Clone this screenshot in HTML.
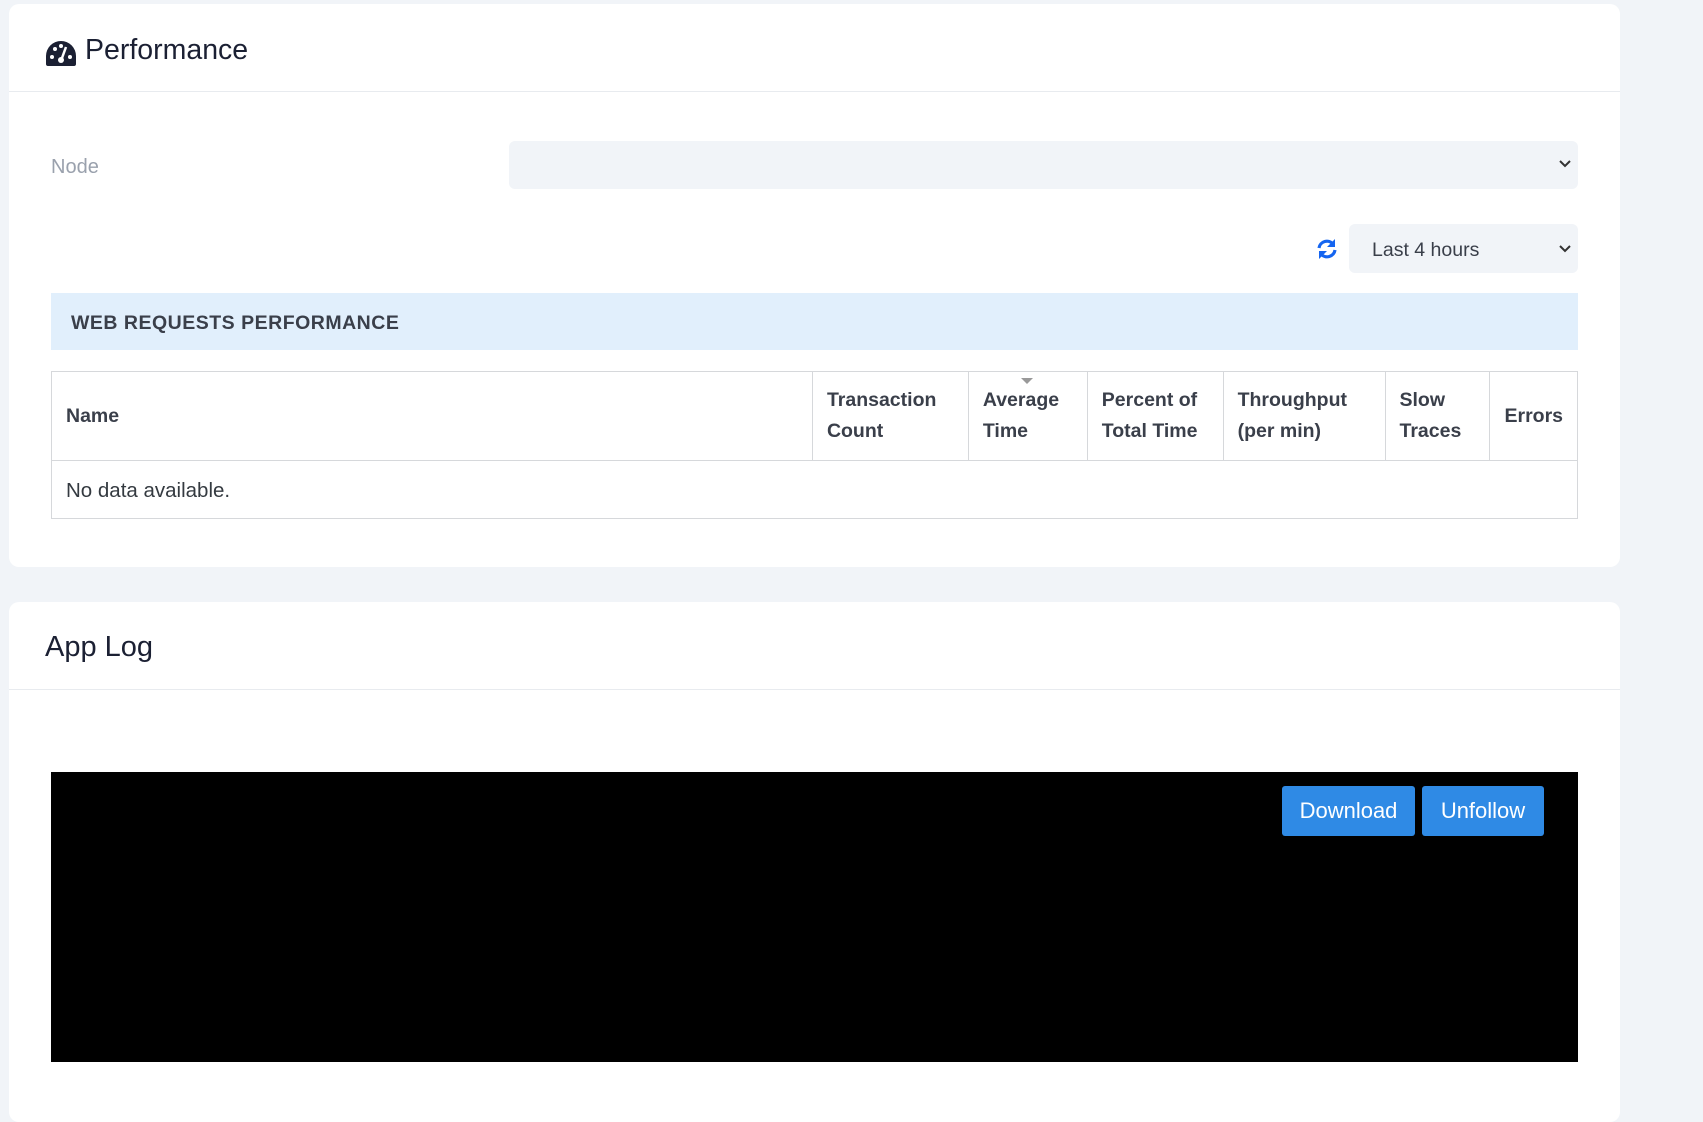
<!DOCTYPE html>
<html><head><style>
*{box-sizing:border-box;margin:0;padding:0}
body{width:1703px;height:1083px;background:#f1f4f8;font-family:"Liberation Sans",sans-serif;color:#212529;position:relative;overflow:hidden}
.card{position:absolute;left:9px;width:1611px;background:#fff;border-radius:10px}
.hdr{position:absolute;left:0;right:0;border-bottom:1px solid #e8ebef}
.abs{position:absolute}
th,td{border:1px solid #d6d8db;text-align:left;font-size:19.5px}
th{font-weight:bold;color:#3a3f4a;line-height:31px;padding:0 14px;vertical-align:middle}
</style></head><body>
<div class="card" style="top:4px;height:563px">
  <div class="hdr" style="top:0;height:88px"></div>
  <svg class="abs" style="left:36px;top:36px" width="32" height="26" viewBox="0 0 32 26">
    <path d="M16 1A15 15 0 0 0 1 16v8c0 1 .6 2 2 2h26c1.4 0 2-1 2-2v-8A15 15 0 0 0 16 1z" fill="#1b2033"/>
    <circle cx="7" cy="17" r="2" fill="#fff"/><circle cx="10" cy="9" r="2" fill="#fff"/><circle cx="16" cy="6" r="2" fill="#fff"/><circle cx="25" cy="17" r="2" fill="#fff"/>
    <path d="M21 7l-4 11" stroke="#fff" stroke-width="2.5"/><circle cx="16" cy="20" r="3" fill="#fff"/>
  </svg>
  <div class="abs" style="left:76px;top:30px;font-size:28.5px;color:#1b2033">Performance</div>
  <div class="abs" style="left:42px;top:152px;font-size:20px;color:#9aa1ad">Node</div>
  <div class="abs" style="left:500px;top:137px;width:1069px;height:48px;background:#f1f4f8;border-radius:6px"></div>
  <svg class="abs" style="left:1549px;top:155px" width="14" height="10"><path d="M2 2l5 5 5-5" stroke="#333" stroke-width="2" fill="none"/></svg>
  <svg class="abs" style="left:1307px;top:234px" width="22" height="22" viewBox="0 0 22 22"><path d="M3 10A8 8 0 0 1 17 6M19 12A8 8 0 0 1 5 16" stroke="#1565f0" stroke-width="3.2" fill="none"/><path d="M19 1v8h-8z M3 21v-8h8z" fill="#1565f0"/></svg>
  <div class="abs" style="left:1340px;top:220px;width:229px;height:49px;background:#f1f4f8;border-radius:6px"></div>
  <div class="abs" style="left:1363px;top:235px;font-size:19.5px;color:#3a3f4a">Last 4 hours</div>
  <svg class="abs" style="left:1549px;top:240px" width="14" height="10"><path d="M2 2l5 5 5-5" stroke="#333" stroke-width="2" fill="none"/></svg>
  <div class="abs" style="left:42px;top:289px;width:1527px;height:57px;background:#e1effc"></div>
  <div class="abs" style="left:62px;top:308px;font-size:19.5px;font-weight:bold;color:#3a3f4a;letter-spacing:.5px">WEB REQUESTS PERFORMANCE</div>
  <table class="abs" style="left:42px;top:367px;width:1527px;border-collapse:collapse">
    <tr style="height:89px">
      <th style="width:764px">Name</th><th style="width:156px">Transaction<br>Count</th><th style="width:119px;position:relative">Average<br>Time<span style="position:absolute;left:52px;top:6px;border:6px solid transparent;border-top:6px solid #999;border-bottom:0"></span></th><th style="width:136px">Percent of<br>Total Time</th><th style="width:162px">Throughput<br>(per min)</th><th style="width:105px">Slow<br>Traces</th><th>Errors</th>
    </tr>
    <tr style="height:58px"><td colspan="7" style="padding:2px 14px 0;color:#343a40;font-size:20.5px">No data available.</td></tr>
  </table>
</div>
<div class="card" style="top:602px;height:520px">
  <div class="hdr" style="top:0;height:88px"></div>
  <div class="abs" style="left:36px;top:29px;font-size:29px;color:#1b2033">App Log</div>
  <div class="abs" style="left:42px;top:170px;width:1527px;height:290px;background:#000"></div>
  <div class="abs" style="left:1273px;top:184px;width:133px;height:50px;background:#2f8ae5;border-radius:3px;color:#fff;font-size:22px;text-align:center;line-height:50px">Download</div>
  <div class="abs" style="left:1413px;top:184px;width:122px;height:50px;background:#2f8ae5;border-radius:3px;color:#fff;font-size:22px;text-align:center;line-height:50px">Unfollow</div>
</div>
</body></html>
